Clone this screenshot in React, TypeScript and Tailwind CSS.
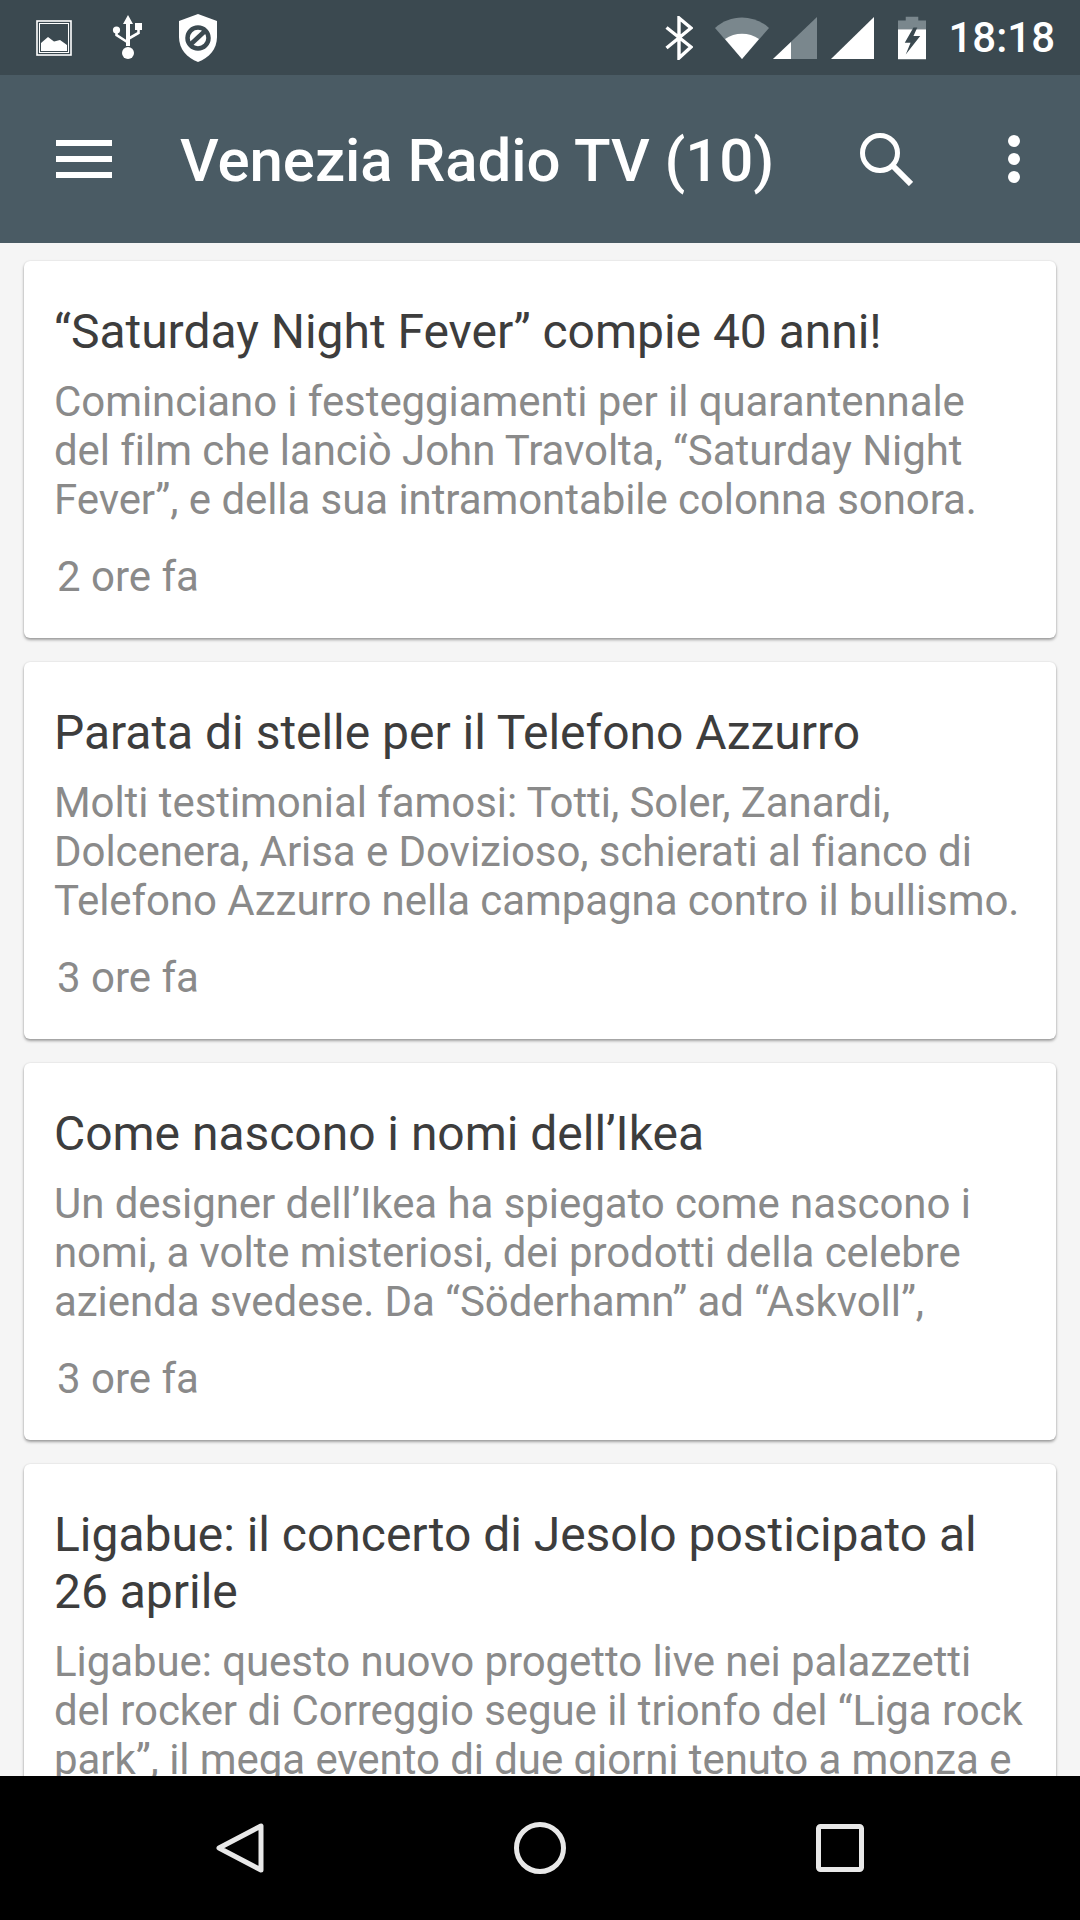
const font = { fontFamily: "Roboto, sans-serif" };

const cards = [
  {
    title: ["“Saturday Night Fever” compie 40 anni!"],
    body: [
      "Cominciano i festeggiamenti per il quarantennale",
      "del film che lanciò John Travolta, “Saturday Night",
      "Fever”, e della sua intramontabile colonna sonora.",
    ],
    time: "2 ore fa",
  },
  {
    title: ["Parata di stelle per il Telefono Azzurro"],
    body: [
      "Molti testimonial famosi: Totti, Soler, Zanardi,",
      "Dolcenera, Arisa e Dovizioso, schierati al fianco di",
      "Telefono Azzurro nella campagna contro il bullismo.",
    ],
    time: "3 ore fa",
  },
  {
    title: ["Come nascono i nomi dell’Ikea"],
    body: [
      "Un designer dell’Ikea ha spiegato come nascono i",
      "nomi, a volte misteriosi, dei prodotti della celebre",
      "azienda svedese. Da “Söderhamn” ad “Askvoll”,",
    ],
    time: "3 ore fa",
  },
  {
    title: ["Ligabue: il concerto di Jesolo posticipato al", "26 aprile"],
    body: [
      "Ligabue: questo nuovo progetto live nei palazzetti",
      "del rocker di Correggio segue il trionfo del “Liga rock",
      "park”, il mega evento di due giorni tenuto a monza e",
    ],
    time: "",
  },
];

function StatusLeft() {
  return (
    <div className="flex items-center">
      <svg width="36" height="36" viewBox="0 0 36 36" className="ml-[36px]">
        <rect x="1" y="1" width="34" height="34" fill="none" stroke="#fff" strokeWidth="1.6" />
        <path d="M5 31V23L12 17L18 21.5L24 20L31 25V31Z" fill="#fff" />
        <rect x="3.5" y="3.5" width="29" height="29" fill="none" stroke="#fff" strokeWidth="1" />
      </svg>
      <svg width="32" height="46" viewBox="0 0 32 46" className="ml-[40px]">
        <path d="M16 0L21 9H18V31H14V9H11Z" fill="#fff" />
        <circle cx="16" cy="38" r="6" fill="#fff" />
        <circle cx="4.5" cy="15" r="3.6" fill="#fff" />
        <rect x="23" y="8" width="7" height="7" fill="#fff" />
        <path d="M4.5 15V20L16 27.5M26.5 14V18L16 24" fill="none" stroke="#fff" strokeWidth="2.6" />
      </svg>
      <svg width="40" height="48" viewBox="0 0 40 48" className="ml-[34px]">
        <path d="M20 0L39 7V23C39 35 31 44 20 48C9 44 1 35 1 23V7Z" fill="#fff" />
        <circle cx="20" cy="24" r="10.5" fill="none" stroke="#3b4950" strokeWidth="4.5" />
        <path d="M13 30L27 17" stroke="#3b4950" strokeWidth="4.5" />
      </svg>
    </div>
  );
}

function StatusRight() {
  return (
    <div className="flex items-center">
      <svg width="28" height="44" viewBox="0 0 28 44">
        <path d="M1.5 11.5L26 31L14 42V2L26 12L1.5 32" fill="none" stroke="#fff" strokeWidth="3.4" />
      </svg>
      <svg width="54" height="42" viewBox="0 0 54 42" className="ml-[22px]">
        <path d="M0 11C15 -3 39 -3 54 11L27 42Z" fill="#7a878d" />
        <path d="M10 22C20 15 34 15 44 22L27 42Z" fill="#fff" />
      </svg>
      <svg width="44" height="42" viewBox="0 0 44 42" className="ml-[4px]">
        <path d="M0 42L44 0V42Z" fill="#7a878d" />
        <path d="M0 42L18 25V42Z" fill="#fff" />
      </svg>
      <svg width="43" height="42" viewBox="0 0 43 42" className="ml-[14px]">
        <path d="M0 42L43 0V42Z" fill="#fff" />
      </svg>
      <svg width="28" height="44" viewBox="0 0 29 44" className="ml-[24px]">
        <path d="M0 4H8V0H21V4H29V13H0Z" fill="#7a878d" />
        <path d="M0 13H29V44H0Z" fill="#fff" />
        <path d="M16 11L7 27H13L8 39L23 20H16L20 11Z" fill="#3b4950" />
      </svg>
      <span className="ml-[22px] mr-[25px] text-[42px] font-medium leading-none text-white" style={font}>
        18:18
      </span>
    </div>
  );
}

function Card({ c }: { c: (typeof cards)[number] }) {
  return (
    <div className="shrink-0 rounded-[6px] bg-white pl-[30px] pt-[42px] pb-[37px] shadow-[0_2px_3px_rgba(0,0,0,0.35),0_0_2px_rgba(0,0,0,0.12)]">
      <div className="text-[48px] leading-[57px] tracking-[-0.03px] text-[#3d3d3d]">
        {c.title.map((t) => (
          <div key={t} className="whitespace-nowrap">
            {t}
          </div>
        ))}
      </div>
      <div className="mt-[17px] text-[42px] leading-[49px] tracking-[-0.07px] text-[#8a8a8a]">
        {c.body.map((t) => (
          <div key={t} className="whitespace-nowrap">
            {t}
          </div>
        ))}
      </div>
      {c.time && (
        <div className="mt-[28px] pl-[3px] text-[42px] leading-[49px] text-[#8a8a8a]">{c.time}</div>
      )}
    </div>
  );
}

export default function App() {
  return (
    <div className="flex h-[1920px] w-[1080px] flex-col overflow-hidden bg-[#f5f5f5]" style={font}>
      <div className="flex h-[75px] shrink-0 items-center justify-between bg-[#3b4950]">
        <StatusLeft />
        <StatusRight />
      </div>
      <div className="flex h-[168px] shrink-0 items-center bg-[#4a5b64]">
        <div className="ml-[56px] flex h-[38px] w-[56px] flex-col justify-between">
          <div className="h-[6px] bg-white" />
          <div className="h-[6px] bg-white" />
          <div className="h-[6px] bg-white" />
        </div>
        <div className="ml-[68px] flex-1 whitespace-nowrap pt-[4px] text-[60px] font-medium leading-none tracking-[-0.05px] text-white">
          Venezia Radio TV (10)
        </div>
        <svg width="53" height="53" viewBox="0 0 53 53" className="mr-[95px]">
          <circle cx="20" cy="20" r="17.5" fill="none" stroke="#fff" strokeWidth="5" />
          <path d="M32 32L51 51" stroke="#fff" strokeWidth="6" />
        </svg>
        <svg width="12" height="48" viewBox="0 0 12 48" className="mr-[60px]">
          <circle cx="6" cy="6" r="6" fill="#fff" />
          <circle cx="6" cy="24" r="6" fill="#fff" />
          <circle cx="6" cy="42" r="6" fill="#fff" />
        </svg>
      </div>
      <div className="flex min-h-0 flex-1 flex-col gap-[24px] overflow-hidden px-[24px] pt-[18px]">
        {cards.map((c) => (
          <Card key={c.title[0]} c={c} />
        ))}
      </div>
      <div className="flex h-[144px] shrink-0 items-center bg-black">
        <svg width="48" height="52" viewBox="0 0 48 52" className="ml-[216px]">
          <path d="M45 4V48L3 26Z" fill="none" stroke="#e8e8e8" strokeWidth="5" strokeLinejoin="round" />
        </svg>
        <svg width="52" height="52" viewBox="0 0 52 52" className="ml-[250px]">
          <circle cx="26" cy="26" r="23.5" fill="none" stroke="#e8e8e8" strokeWidth="5" />
        </svg>
        <svg width="48" height="48" viewBox="0 0 48 48" className="ml-[250px]">
          <rect x="2.5" y="2.5" width="43" height="43" rx="2" fill="none" stroke="#e8e8e8" strokeWidth="5" />
        </svg>
      </div>
    </div>
  );
}
